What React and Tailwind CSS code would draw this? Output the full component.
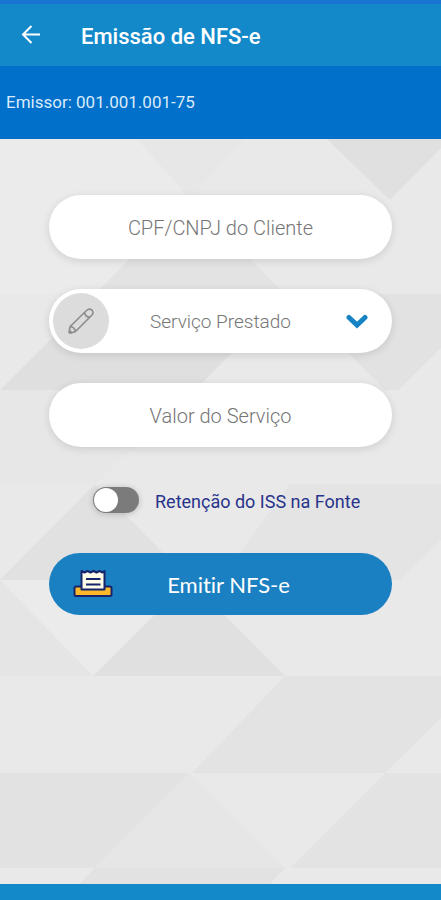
import { useState } from "react";

const facets = [
  { points: "0,139 137,139 190,198 95,294 0,294", fill: "#ebebeb" },
  { points: "137,139 245,139 190,198", fill: "#e7e7e7" },
  { points: "327,139 441,139 441,148 390,200", fill: "#e0e0e0" },
  { points: "190,198 285,294 95,294", fill: "#e3e3e3" },
  { points: "0,390 96,294 290,294 195,390", fill: "#dfdfdf" },
  { points: "290,294 441,294 441,348 398,390 385,390", fill: "#e2e2e2" },
  { points: "0,390 190,390 95,484 0,484", fill: "#e7e7e7" },
  { points: "0,580 95,484 190,580", fill: "#e1e1e1" },
  { points: "95,484 290,484 200,580 190,580", fill: "#e9e9e9" },
  { points: "290,484 441,484 441,540 400,580 220,580", fill: "#e4e4e4" },
  { points: "0,580 93,676 0,676", fill: "#e5e5e5" },
  { points: "0,580 190,580 93,676", fill: "#ebebeb" },
  { points: "93,676 190,580 285,676", fill: "#e0e0e0" },
  { points: "285,676 441,676 441,718 385,773 192,773", fill: "#e3e3e3" },
  { points: "0,773 189,773 95,868 0,868", fill: "#e2e2e2" },
  { points: "189,773 285,868 95,868", fill: "#e6e6e6" },
  { points: "385,773 441,773 441,868 290,868", fill: "#e3e3e3" },
  { points: "95,868 285,868 270,884 80,884", fill: "#e2e2e2" },
];

function Background() {
  return (
    <svg
      className="absolute inset-0 h-full w-full"
      viewBox="0 139 441 745"
      preserveAspectRatio="xMidYMid slice"
      aria-hidden="true"
    >
      {facets.map((f) => (
        <polygon key={f.points} points={f.points} fill={f.fill} />
      ))}
    </svg>
  );
}

function BackIcon() {
  return (
    <svg width="20" height="20" viewBox="0 0 20 20" fill="none" stroke="currentColor" strokeWidth="2" aria-hidden="true">
      <path d="M19 9.500H2.500M10.500 1L2 9.500l8.500 8.500" />
    </svg>
  );
}

function PencilIcon() {
  return (
    <svg width="28" height="28" viewBox="0 0 28 28" fill="none" stroke="#8c8c8c" strokeWidth="1.600" strokeLinejoin="round" aria-hidden="true">
      <path d="M2.200 24L3.200 19.500 19.500 3.500Q22.500 0.800 25 3.200Q27.300 5.600 24.500 8.500L8.500 24.500L4 26Q1.500 26.500 2.200 24Z" />
      <path d="M3.200 19.500Q7.500 20 8.500 24.500M17.500 5.500Q18.500 10 22.800 10.200" />
      <path d="M2.500 23.500L4.800 25.600" />
    </svg>
  );
}

function ReceiptIcon() {
  return (
    <svg width="40" height="30" viewBox="0 0 40 30" stroke="#17236b" strokeLinejoin="round" aria-hidden="true">
      <path d="M3 17.500h34q1.500 0 1.500 1.500v6.500q0 1.500-1.500 1.500H3q-1.500 0-1.500-1.500V19q0-1.500 1.500-1.500z" fill="#fbb829" strokeWidth="2" />
      <path d="M8.500 20.500V2l3 1.500 3-1.500 3 1.500 3-1.500 3 1.500 3-1.500 3 1.500 2-1.500v18.500z" fill="#fdfce8" strokeWidth="2" />
      <path d="M13 10h14.500M13 15.500h14.500" fill="none" strokeWidth="2" />
    </svg>
  );
}

const fieldClass =
  "h-16 w-full rounded-full bg-white pt-0.5 text-center font-light text-[#757575] shadow-[0_2px_8px_rgba(0,0,0,0.12)] outline-none placeholder:text-[#757575]";

export default function App() {
  const [retencao, setRetencao] = useState(false);

  return (
    <div className="flex min-h-screen flex-col bg-[#1389c9] font-[Roboto,sans-serif]">
      <header className="border-t-4 border-[#1a74d4] text-white">
        <div className="flex h-[62px] items-center gap-10 px-[21px]">
          <button type="button" aria-label="Voltar">
            <BackIcon />
          </button>
          <h1 className="pt-0.5 text-[22px] font-medium">Emissão de NFS-e</h1>
        </div>
        <div className="flex h-[73px] items-center bg-[#0070ca] px-[6px]">
          <p className="text-[17px] text-[#d9ebfa]">Emissor: 001.001.001-75</p>
        </div>
      </header>

      <main className="relative flex-1 bg-[#e9e9e9]">
        <Background />
        <form className="relative flex flex-col gap-[41px] px-[49px] pt-14" onSubmit={(e) => e.preventDefault()}>
          <div className="flex flex-col gap-[30px]">
            <input
              type="text"
              aria-label="CPF/CNPJ do Cliente"
              placeholder="CPF/CNPJ do Cliente"
              className={`${fieldClass} text-xl`}
            />
            <div className="relative">
              <select
                aria-label="Serviço Prestado"
                defaultValue=""
                className={`${fieldClass} appearance-none text-[19px] [text-align-last:center]`}
              >
                <option value="">Serviço Prestado</option>
              </select>
              <span className="pointer-events-none absolute inset-y-1 left-1 flex w-14 items-center justify-center rounded-full bg-[#dcdcdc]">
                <PencilIcon />
              </span>
              <span className="pointer-events-none absolute inset-y-0 right-6 flex items-center">
                <svg width="22" height="16" viewBox="0 0 22 16" fill="none" stroke="#1583c4" strokeWidth="5" strokeLinecap="round" aria-hidden="true">
                  <path d="M3 4.500l8 7.500 8-7.500" />
                </svg>
              </span>
            </div>
            <input
              type="text"
              inputMode="decimal"
              aria-label="Valor do Serviço"
              placeholder="Valor do Serviço"
              className={`${fieldClass} text-xl`}
            />
          </div>

          <label className="flex h-6 items-center gap-4 pl-11 text-lg text-[#27338a]">
            <input
              type="checkbox"
              role="switch"
              checked={retencao}
              onChange={(e) => setRetencao(e.target.checked)}
              className="h-[26px] w-[46px] shrink-0 appearance-none rounded-full bg-[#7b7b7b] p-px shadow-[0_1px_6px_rgba(0,0,0,0.2)] before:block before:size-6 before:rounded-full before:bg-white checked:bg-[#1b80c1] checked:before:ml-5"
            />
            <span className="pt-1">Retenção do ISS na Fonte</span>
          </label>

          <button
            type="submit"
            className="relative h-[62px] w-full rounded-full bg-[#1b80c1] pl-4 font-[Lato,sans-serif] text-[22px] text-white [font-variant-ligatures:none]"
          >
            <span className="absolute inset-y-0 left-6 flex items-center">
              <ReceiptIcon />
            </span>
            Emitir NFS-e
          </button>
        </form>
      </main>

      <footer className="h-4 bg-[#1389c9]" />
    </div>
  );
}
